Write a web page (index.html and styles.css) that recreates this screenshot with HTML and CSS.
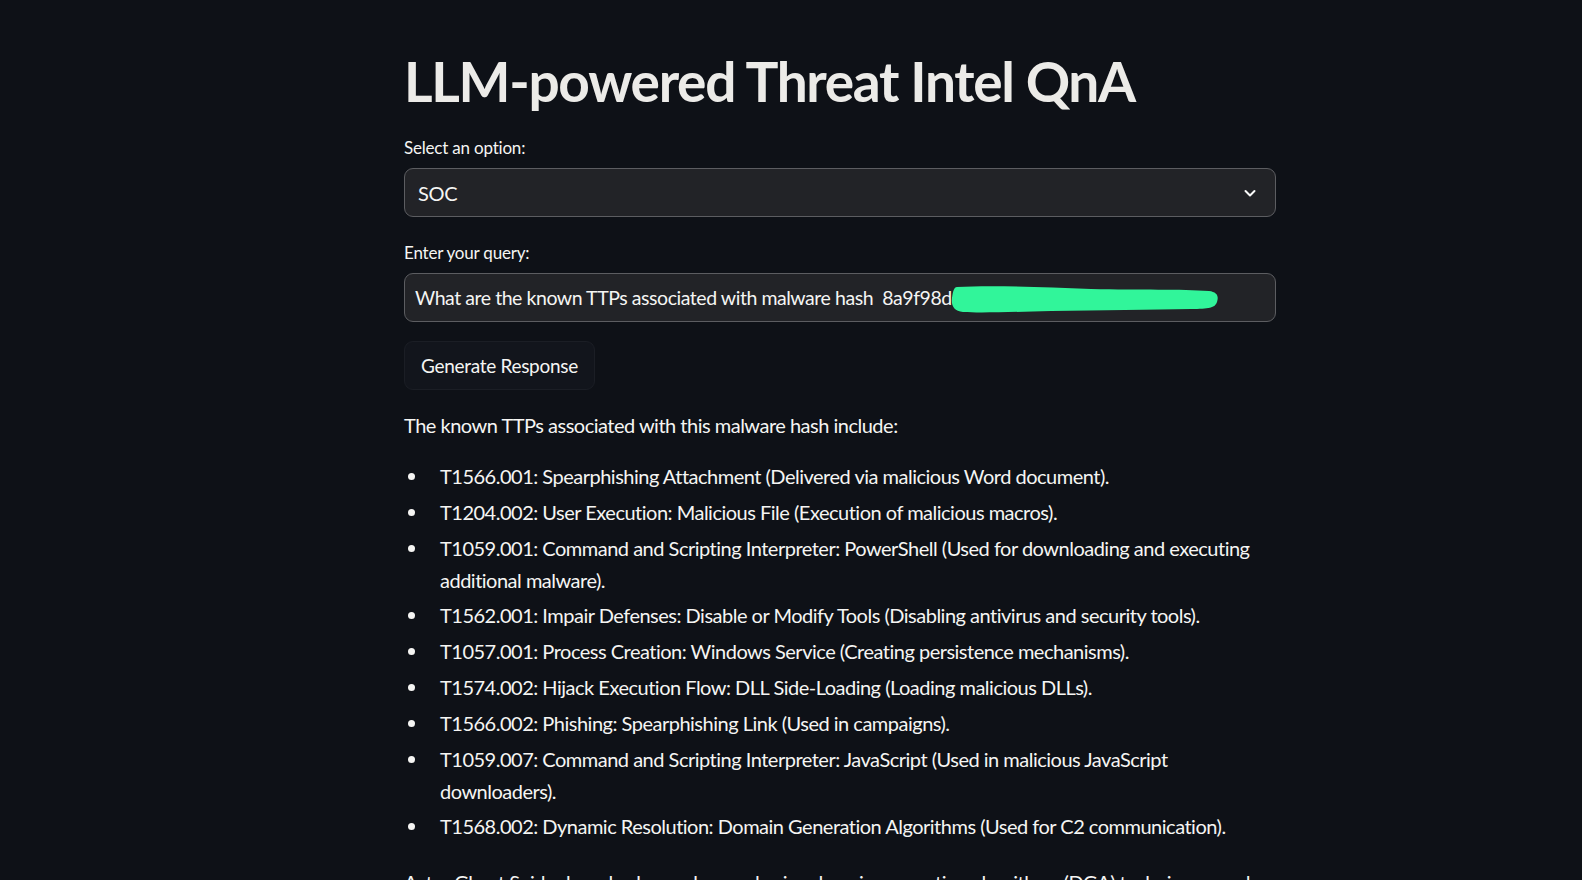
FILE: index.html
```html
<!DOCTYPE html>
<html lang="en">
<head>
<meta charset="utf-8">
<title>LLM-powered Threat Intel QnA</title>
<link rel="stylesheet" href="styles.css">
</head>
<body>
<main class="block">
  <h1 class="title">LLM-powered Threat Intel QnA</h1>

  <div class="field">
    <label class="label">Select an option:</label>
    <div class="select">
      <span class="select-value">SOC</span>
      <svg class="chevron" viewBox="0 0 16 16" width="16" height="16" aria-hidden="true">
        <path d="M3.5 6 L8 10.5 L12.5 6" fill="none" stroke="#fafafa" stroke-width="2" stroke-linecap="round" stroke-linejoin="round"/>
      </svg>
    </div>
  </div>

  <div class="field field-query">
    <label class="label">Enter your query:</label>
    <div class="input">
      <span class="input-value">What are the known TTPs associated with malware hash&nbsp; 8a9f98d</span>
      <svg class="redact" viewBox="0 0 268 30" width="268" height="30" aria-hidden="true">
        <path d="M6 3 C40 1 90 3 140 5 C190 6 230 5 258 7 C266 8 268 12 266 18 C264 24 258 25 240 25 C200 26 150 26 100 27 C60 28 30 29 12 28 C3 27 0 22 1 14 C2 7 3 3 6 3 Z" fill="#31f59a"/>
      </svg>
    </div>
  </div>

  <button class="btn" type="button">Generate Response</button>

  <div class="answer">
    <p class="lead">The known TTPs associated with this malware hash include:</p>
    <ul class="ttps">
      <li>T1566.001: Spearphishing Attachment (Delivered via malicious Word document).</li>
      <li>T1204.002: User Execution: Malicious File (Execution of malicious macros).</li>
      <li>T1059.001: Command and Scripting Interpreter: PowerShell (Used for downloading and executing additional malware).</li>
      <li>T1562.001: Impair Defenses: Disable or Modify Tools (Disabling antivirus and security tools).</li>
      <li>T1057.001: Process Creation: Windows Service (Creating persistence mechanisms).</li>
      <li>T1574.002: Hijack Execution Flow: DLL Side-Loading (Loading malicious DLLs).</li>
      <li>T1566.002: Phishing: Spearphishing Link (Used in campaigns).</li>
      <li>T1059.007: Command and Scripting Interpreter: JavaScript (Used in malicious JavaScript downloaders).</li>
      <li>T1568.002: Dynamic Resolution: Domain Generation Algorithms (Used for C2 communication).</li>
    </ul>
    <p class="tail">Actor Ghost Spider has also been observed using domain generation algorithms (DGA) techniques, and could be blocked using domain</p>
  </div>
</main>
</body>
</html>
```

FILE: styles.css
```css
html, body {
  margin: 0;
  padding: 0;
  background: #0e1117;
  height: 100%;
  overflow: hidden;
}

body {
  color: #f5f5f3;
  font-family: "Lato", "Open Sans", sans-serif;
}

.block {
  width: 872px;
  margin-left: 404px;
  padding-top: 48px;
}

.title {
  margin: 0;
  font-size: 55px;
  line-height: 66px;
  font-weight: 700;
  letter-spacing: -1.3px;
  color: #ecebe8;
}

.field {
  margin-top: 23px;
}

.field-query {
  margin-top: 25px;
}

.label {
  display: block;
  font-size: 17px;
  line-height: 22px;
  letter-spacing: -0.2px;
  margin-bottom: 9px;
}

.select,
.input {
  box-sizing: border-box;
  height: 49px;
  border: 1px solid #5c5d61;
  border-radius: 9px;
  background: #222327;
  display: flex;
  align-items: center;
}

.select {
  padding: 0 17px 0 13px;
  justify-content: space-between;
}

.select-value {
  font-size: 20px;
  letter-spacing: -0.3px;
}

.chevron {
  width: 16px;
  height: 16px;
}

.input {
  padding: 0 10px;
}

.input-value {
  font-size: 19.5px;
  letter-spacing: -0.45px;
  white-space: nowrap;
}

.redact {
  flex: none;
  margin-left: -1px;
  margin-top: 2px;
}

.btn {
  display: block;
  margin-top: 19px;
  height: 49px;
  padding: 0 16px;
  border: 1px solid #1b1e25;
  border-radius: 9px;
  background: #12151c;
  color: #f5f5f3;
  font-family: inherit;
  font-size: 19px;
  letter-spacing: -0.3px;
}

.answer {
  margin-top: 19px;
  font-size: 20px;
  line-height: 32px;
  letter-spacing: -0.5px;
}

.lead {
  margin: 0 0 19px;
}

.ttps {
  margin: 0;
  padding: 0 0 0 36px;
  list-style: none;
}

.ttps li {
  position: relative;
  margin-bottom: 3.8px;
}

.ttps li::before {
  content: "";
  position: absolute;
  left: -32px;
  top: 13px;
  width: 7px;
  height: 7px;
  border-radius: 50%;
  background: #f5f5f3;
}

.tail {
  margin: 24px 0 0;
}
```
